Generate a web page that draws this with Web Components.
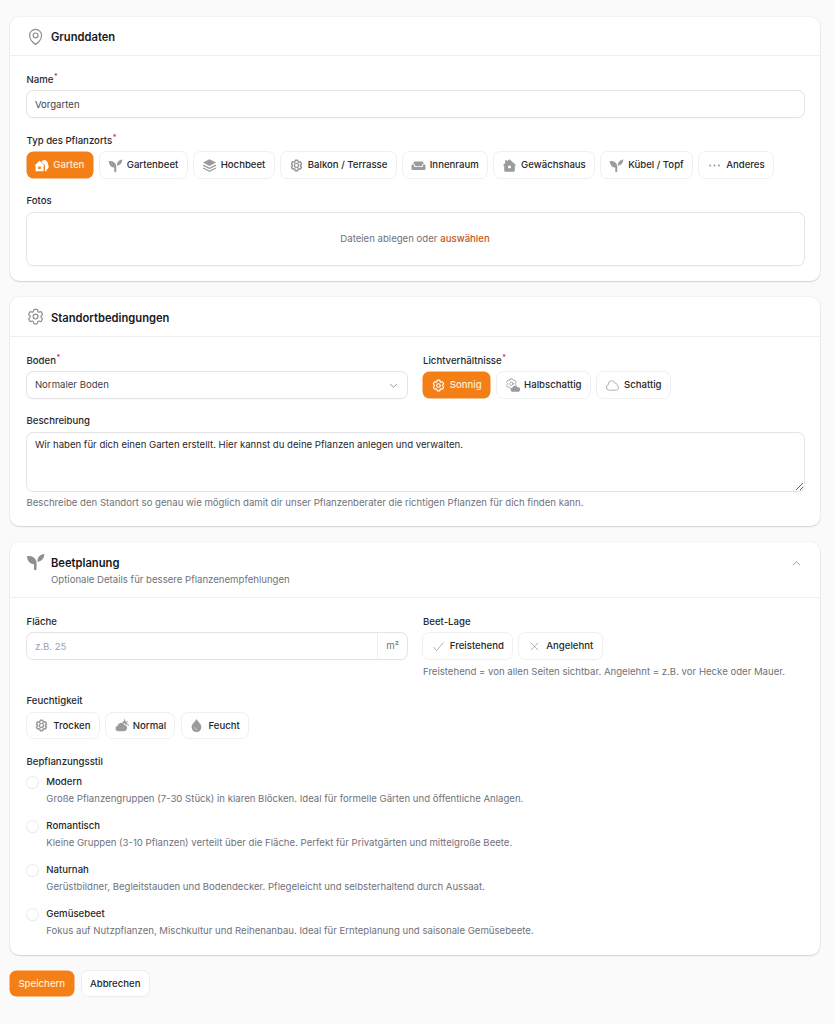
<!DOCTYPE html>
<html lang="de"><head><meta charset="utf-8"><title>Pflanzort</title>
<style>
html,body{margin:0;padding:0}
body{background:#fafafa;font-family:Inter,"Liberation Sans",sans-serif;color:#18181b;font-size:9.6px;width:834px;height:1024px;overflow:hidden}
</style></head><body>
<x-page>
<x-card icon="pin" heading="Grunddaten" style="--pb:16px">
  <x-field label="Name" req><x-box>Vorgarten</x-box></x-field>
  <x-field label="Typ des Pflanzorts" req>
    <x-pills>
      <x-pill icon="garden" active>Garten</x-pill><x-pill icon="sprout">Gartenbeet</x-pill><x-pill icon="layers">Hochbeet</x-pill><x-pill icon="gearfill">Balkon / Terrasse</x-pill><x-pill icon="sofa">Innenraum</x-pill><x-pill icon="house">Gewächshaus</x-pill><x-pill icon="sprout">Kübel / Topf</x-pill><x-pill icon="dots">Anderes</x-pill>
    </x-pills>
  </x-field>
  <x-field label="Fotos"><x-drop>Dateien ablegen oder <b slot="link">auswählen</b></x-drop></x-field>
</x-card>
<x-card icon="gear" heading="Standortbedingungen" style="--pb:17px">
  <x-cols>
    <x-field label="Boden" req><x-box select>Normaler Boden</x-box></x-field>
    <x-field label="Lichtverhältnisse" req><x-pills><x-pill icon="gearS" active>Sonnig</x-pill><x-pill icon="gearcloud">Halbschattig</x-pill><x-pill icon="cloud">Schattig</x-pill></x-pills></x-field>
  </x-cols>
  <x-field label="Beschreibung" hint="Beschreibe den Standort so genau wie möglich damit dir unser Pflanzenberater die richtigen Pflanzen für dich finden kann."><x-area>Wir haben für dich einen Garten erstellt. Hier kannst du deine Pflanzen anlegen und verwalten.</x-area></x-field>
</x-card>
<x-card icon="sprout" heading="Beetplanung" sub="Optionale Details für bessere Pflanzenempfehlungen" collapsible style="--pb:17px">
  <x-cols>
    <x-field label="Fläche"><x-box placeholder unit="m²">z.B. 25</x-box></x-field>
    <x-field label="Beet-Lage" hint="Freistehend = von allen Seiten sichtbar. Angelehnt = z.B. vor Hecke oder Mauer."><x-pills><x-pill icon="check">Freistehend</x-pill><x-pill icon="x">Angelehnt</x-pill></x-pills></x-field>
  </x-cols>
  <x-field label="Feuchtigkeit"><x-pills><x-pill icon="gearfill">Trocken</x-pill><x-pill icon="cloudsun">Normal</x-pill><x-pill icon="drop">Feucht</x-pill></x-pills></x-field>
  <x-field label="Bepflanzungsstil"><x-radios>
    <x-radio heading="Modern">Große Pflanzengruppen (7-30 Stück) in klaren Blöcken. Ideal für formelle Gärten und öffentliche Anlagen.</x-radio>
    <x-radio heading="Romantisch">Kleine Gruppen (3-10 Pflanzen) verteilt über die Fläche. Perfekt für Privatgärten und mittelgroße Beete.</x-radio>
    <x-radio heading="Naturnah">Gerüstbildner, Begleitstauden und Bodendecker. Pflegeleicht und selbsterhaltend durch Aussaat.</x-radio>
    <x-radio heading="Gemüsebeet">Fokus auf Nutzpflanzen, Mischkultur und Reihenanbau. Ideal für Ernteplanung und saisonale Gemüsebeete.</x-radio>
  </x-radios></x-field>
</x-card>
<x-actions><x-button primary>Speichern</x-button><x-button>Abbrechen</x-button></x-actions>
</x-page>
<script>
const GEAR='M9.594 3.94c.09-.542.56-.94 1.11-.94h2.593c.55 0 1.02.398 1.11.94l.213 1.281c.063.374.313.686.645.87.074.04.147.083.22.127.325.196.72.257 1.075.124l1.217-.456a1.125 1.125 0 0 1 1.37.49l1.296 2.247a1.125 1.125 0 0 1-.26 1.431l-1.003.827c-.293.241-.438.613-.43.992a7.723 7.723 0 0 1 0 .255c-.008.378.137.75.43.991l1.004.827c.424.35.534.955.26 1.43l-1.298 2.247a1.125 1.125 0 0 1-1.369.491l-1.217-.456c-.355-.133-.75-.072-1.076.124a6.47 6.47 0 0 1-.22.128c-.331.183-.581.495-.644.869l-.213 1.281c-.09.543-.56.94-1.11.94h-2.594c-.55 0-1.019-.398-1.11-.94l-.213-1.281c-.062-.374-.312-.686-.644-.87a6.52 6.52 0 0 1-.22-.127c-.325-.196-.72-.257-1.076-.124l-1.217.456a1.125 1.125 0 0 1-1.369-.49l-1.297-2.247a1.125 1.125 0 0 1 .26-1.431l1.004-.827c.292-.24.437-.613.43-.991a6.932 6.932 0 0 1 0-.255c.007-.38-.138-.751-.43-.992l-1.004-.827a1.125 1.125 0 0 1-.26-1.43l1.297-2.247a1.125 1.125 0 0 1 1.37-.491l1.216.456c.356.133.751.072 1.076-.124.072-.044.146-.086.22-.128.332-.183.582-.495.644-.869l.214-1.28Z';
const CIRC='M15 12a3 3 0 1 1-6 0 3 3 0 0 1 6 0Z';
const S=(d,w=1.5)=>`<path d="${d}" fill="none" stroke="currentColor" stroke-width="${w}" stroke-linecap="round" stroke-linejoin="round"/>`;
const F=d=>`<path d="${d}" fill="currentColor" fill-rule="evenodd"/>`;
const ICONS={
 pin:S('M15 10.5a3 3 0 1 1-6 0 3 3 0 0 1 6 0Z')+S('M19.5 10.5c0 7.142-7.5 11.25-7.5 11.25S4.5 17.642 4.5 10.5a7.5 7.5 0 1 1 15 0Z'),
 gear:S(GEAR)+S(CIRC),
 gearS:`<g transform="translate(.6 .6) scale(.95)">${S(GEAR,1.9)}${S(CIRC,1.9)}</g>`,
 gearfill:`<g transform="translate(.8 .8) scale(.93)">${S(GEAR,2.6)}${F('M7.4 12a4.6 4.6 0 1 0 9.2 0 4.600 4.600 0 1 0-9.200 0Zm2.200 0a2.400 2.400 0 1 1 4.800 0 2.400 2.400 0 1 1-4.800 0Z')}</g>`,
 gearcloud:`<g transform="translate(-.5 -1.500) scale(.9)">${S(GEAR,1.5)}${S(CIRC,1.5)}</g>`+F('M12.500 22a3.200 3.200 0 0 1-.4-6.400 4.200 4.200 0 0 1 8-.8 3.600 3.600 0 0 1 1 7.200Z'),
 cloud:S('M2.25 15a4.5 4.5 0 0 0 4.5 4.5H18a3.75 3.75 0 0 0 1.332-7.257 3 3 0 0 0-3.758-3.848 5.25 5.25 0 0 0-10.233 2.33A4.502 4.502 0 0 0 2.25 15Z',1.2),
 sprout:F('M1.200 5.200c5.800-1.100 10.400 1.500 12 6.800v9.200a1.600 1.600 0 0 1-3.200 0v-5.900C4.800 15 1.700 10.900 1.200 5.200Z')+F('M23 2.500c-.3 5.500-3.300 9-8.600 9.800-.5-5.400 2.900-9.200 8.600-9.800Z'),
 layers:F('M12 2 22.500 7.300 12 12.600 1.500 7.300Z')+S('M2.500 11.800 12 16.600l9.500-4.800',2)+S('M2.500 16.300 12 21.100l9.500-4.800',2),
 sofa:F('M6.500 5.500h11A2.500 2.500 0 0 1 20 8v1.700a3.200 3.200 0 0 0-3 3.300H7a3.200 3.200 0 0 0-3-3.300V8a2.500 2.500 0 0 1 2.500-2.500Z')+F('M.8 12.500a2.200 2.200 0 0 1 4.400 0v2h13.600v-2a2.200 2.200 0 0 1 4.400 0V17a2.200 2.200 0 0 1-2.200 2.200H3A2.200 2.200 0 0 1 .8 17Z'),
 house:F('M12 1.800 23 11.800H20.500V20a1.800 1.800 0 0 1-1.800 1.800H5.300A1.800 1.800 0 0 1 3.500 20v-8.200H1L5 8.200V3.500h3.200v1.800ZM9.800 12.500v3.800h4.400v-3.800Z'),
 garden:F('M8.800 4.500 17 12.300H15.300V21H2.500V12.300H.6ZM6.800 13.500v4h4v-4Z')+F('M16.300 3c3.300 0 5.400 2.300 5.700 5.300.2 1.900 1.500 3.300 1.500 5.500 0 2.200-1.400 3.900-3.500 4.500V21h-2.500V11.200L11.800 6.600C12.600 4.500 14.300 3 16.300 3Z'),
 dots:`<circle cx="5" cy="12" r="1.600" fill="currentColor"/><circle cx="12" cy="12" r="1.600" fill="currentColor"/><circle cx="19" cy="12" r="1.600" fill="currentColor"/>`,
 check:S('m4.500 13.500 4.500 5L19.500 6',1.2),
 x:S('M6.500 6.500l11 11M17.500 6.500l-11 11',1.2),
 cloudsun:F('M6.500 21a4.300 4.300 0 0 1-.8-8.500 5.800 5.800 0 0 1 11.200-1.200 4.900 4.900 0 0 1-.6 9.700Z')+F('M13 7.800a4.200 4.200 0 0 1 8.200 2.500l-2.200.5a7 7 0 0 0-6-3ZM16 2h1.600v2.800H16ZM21 4.200l1.100 1.100-2 2-1.100-1.100ZM21.500 10.200h2.500v1.600h-2.500Z'),
 drop:`<path fill="currentColor" fill-rule="evenodd" d="M12 1.500c1.600 3.200 7.800 8 7.800 13.200a7.800 7.800 0 0 1-15.600 0C4.200 9.500 10.400 4.700 12 1.500Z"/><path d="M9 15.500a3.500 3.500 0 0 0 3.500 3.300" fill="none" stroke="#d4d4d8" stroke-width="1.300" stroke-linecap="round"/>`,
 up:S('m5 15 7-7 7 7',1.7),
 down:S('m5 9 7 7 7-7',1.7)
};
const A=(e,n)=>e.getAttribute(n)||'';
function el(name,render){customElements.define(name,class extends HTMLElement{connectedCallback(){if(this.shadowRoot)return;const r=this.attachShadow({mode:'open'});r.innerHTML=render(this);}});}
const GREY='#71717a';
const BOX='0 0 0 1px #e4e4e7,0 1px 2px rgba(24,24,27,.08)';
const FONT='Inter,"Liberation Sans",sans-serif';
const ORANGE='#f57f17';
el('x-icon',e=>`<style>:host{display:inline-flex;flex:none;width:var(--s,16px);height:var(--s,16px)}svg{width:100%;height:100%;display:block}</style><svg viewBox="0 0 24 24">${ICONS[A(e,'name')]||''}</svg>`);
el('x-page',()=>`<style>:host{display:flex;flex-direction:column;gap:16px;padding:16.600px 14px 0 10px}</style><slot></slot>`);
el('x-card',e=>{const sub=A(e,'sub');return `<style>
 :host{display:block;background:#fff;border-radius:9.6px;box-shadow:0 0 0 1px rgba(24,24,27,.03),0 1px 1.5px rgba(24,24,27,.14)}
 header{display:flex;align-items:flex-start;gap:5.800px;box-sizing:border-box;height:${sub?55.6:39.4}px;padding:${sub?'9.5px':'10px'} 16px 0 16px;border-bottom:1px solid #efeff1}
 x-icon{--s:19.200px;color:#8e8e94}
 .t{flex:1;${sub?'padding-top:3px':'padding-top:2.4px'}}
 h2{margin:0;font:600 11.200px/16px ${FONT};color:#18181b}
 p{margin:2.500px 0 0;font:400 9.600px/14px ${FONT};color:${GREY}}
 .chev{--s:11px;color:#84848b;margin:6px 2.500px 0 0}
 .b{display:flex;flex-direction:column;gap:16px;padding:16px 16.500px var(--pb,16.600px)}
 </style><header><x-icon name="${A(e,'icon')}"></x-icon><div class="t"><h2>${A(e,'heading')}</h2>${sub?`<p>${sub}</p>`:''}</div>${e.hasAttribute('collapsible')?'<x-icon class="chev" name="up"></x-icon>':''}</header><div class="b"><slot></slot></div>`;});
el('x-field',e=>{const h=A(e,'hint');return `<style>
 :host{display:block;min-width:0}
 label{display:block;font:500 9.600px/14px ${FONT};color:#27272a;padding-top:.8px;margin-bottom:4.400px}
 sup{color:#e11d48;font-size:7.200px;line-height:0;vertical-align:3.500px;margin-left:.5px}
 p{margin:5.800px 0 -1px;font:400 9.600px/14px ${FONT};color:${GREY}}
 </style><label>${A(e,'label')}${e.hasAttribute('req')?'<sup>*</sup>':''}</label><slot></slot>${h?`<p>${h}</p>`:''}`;});
el('x-cols',()=>`<style>:host{display:grid;grid-template-columns:1fr 1fr;gap:16px}</style><slot></slot>`);
el('x-pills',()=>`<style>:host{display:flex;gap:7.200px}</style><slot></slot>`);
el('x-pill',e=>{const a=e.hasAttribute('active');return `<style>
 :host{display:inline-flex;align-items:center;gap:4px;height:25.600px;box-sizing:border-box;padding:.6px 8.400px 0 7.800px;border-radius:6.400px;font:500 9.600px/14px ${FONT};white-space:nowrap;background:${a?ORANGE:'#fff'};color:${a?'#ffedd5':'#27272a'};box-shadow:${a?'0 0 0 .5px '+ORANGE:'0 0 0 1px #f0f0f2,0 1px 1px rgba(24,24,27,.02)'}}
 x-icon{--s:15px;color:${a?'#fff':'#9a9a9f'}}
 </style><x-icon name="${A(e,'icon')}"></x-icon><slot></slot>`;});
el('x-box',e=>{const u=A(e,'unit'),ph=e.hasAttribute('placeholder'),sel=e.hasAttribute('select');return `<style>
 :host{display:flex;align-items:center;height:25.600px;box-sizing:border-box;padding-top:1.400px;background:#fff;border-radius:6.400px;box-shadow:${BOX};font:400 9.600px/14px ${FONT};color:${ph?'#a1a1aa':'#3f3f46'}}
 .v{flex:1;padding:0 8.400px}
 .u{align-self:stretch;display:flex;align-items:center;margin-top:-1.400px;padding:0 8px;border-left:1px solid #efeff1;color:${GREY}}
 x-icon{--s:11px;color:#7d7d84;margin-right:8px}
 </style><div class="v"><slot></slot></div>${u?`<div class="u">${u}</div>`:''}${sel?'<x-icon name="down"></x-icon>':''}`;});
el('x-drop',()=>`<style>
 :host{display:flex;align-items:center;justify-content:center;gap:.3em;height:52.600px;background:#fff;border-radius:6.400px;box-shadow:${BOX};font:400 9.600px/14px ${FONT};color:${GREY}}
 ::slotted(b){font-weight:500;color:#c2571a}
 </style><span><slot></slot></span><slot name="link"></slot>`);
customElements.define('x-area',class extends HTMLElement{connectedCallback(){if(this.shadowRoot)return;const t=this.textContent;this.textContent='';const r=this.attachShadow({mode:'open'});
 r.innerHTML=`<style>:host{display:block}
 textarea{display:block;box-sizing:border-box;width:100%;height:58px;margin:0;padding:5.400px 8.400px;border:0;outline:0;border-radius:6.400px;background:#fff;box-shadow:${BOX};font:400 9.600px/14px ${FONT};color:#27272a;resize:vertical}
 </style><textarea></textarea>`;r.querySelector('textarea').textContent=t;}});
el('x-radios',()=>`<style>:host{display:flex;flex-direction:column;gap:12px}</style><slot></slot>`);
el('x-radio',e=>`<style>
 :host{display:flex;gap:8px;height:32px}
 i{flex:none;width:11.800px;height:11.800px;border-radius:50%;background:#fff;box-shadow:0 0 0 1px #ececee,0 1px 1px rgba(24,24,27,.1);margin-top:3px}
 h3{margin:0;padding-top:.8px;font:500 9.600px/16px ${FONT};color:#27272a}
 p{margin:2px 0 0;font:400 9.600px/14px ${FONT};color:${GREY}}
 </style><i></i><div><h3>${A(e,'heading')}</h3><p><slot></slot></p></div>`);
el('x-actions',()=>`<style>:host{display:flex;gap:8px}</style><slot></slot>`);
el('x-button',e=>{const p=e.hasAttribute('primary');return `<style>:host{display:inline-flex;align-items:center;height:25.600px;box-sizing:border-box;padding:.6px 8.400px 0;border-radius:6.400px;font:500 9.600px/14px ${FONT};background:${p?ORANGE:'#fff'};color:${p?'#ffedd5':'#27272a'};box-shadow:${p?'0 0 0 .5px '+ORANGE:'0 0 0 1px #eeeef0,0 1px 1px rgba(24,24,27,.03)'}}</style><slot></slot>`;});
</script>
</body></html>
